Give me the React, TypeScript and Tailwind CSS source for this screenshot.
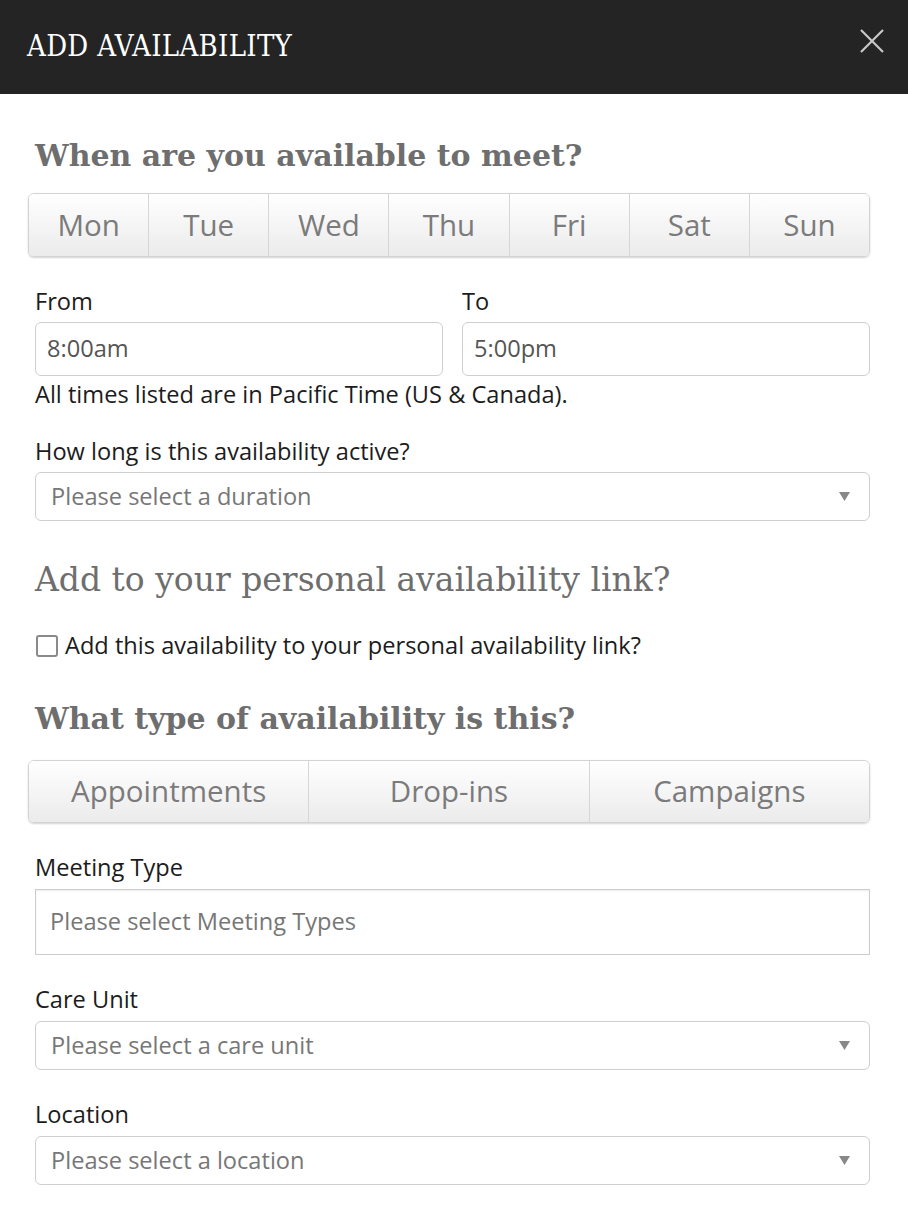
import React from 'react';

const days = ['Mon', 'Tue', 'Wed', 'Thu', 'Fri', 'Sat', 'Sun'];
const types = ['Appointments', 'Drop-ins', 'Campaigns'];

const slab = "font-['Roboto_Slab','DejaVu_Serif',serif]";

function ButtonGroup({ items, height }: { items: string[]; height: string }) {
  return (
    <div
      className={`-ml-[7px] flex ${height} overflow-hidden rounded-[6px] border border-[#d3d3d3] shadow-[0_1px_2px_rgba(0,0,0,0.18)]`}
    >
      {items.map((item, i) => (
        <div
          key={item}
          className={`flex flex-1 items-center justify-center bg-gradient-to-b from-white to-[#ebebeb] text-[29.5px] text-[#7b7b7b] ${
            i > 0 ? 'border-l border-[#d6d6d6]' : ''
          }`}
        >
          {item}
        </div>
      ))}
    </div>
  );
}

function Select({ placeholder }: { placeholder: string }) {
  return (
    <div className="flex h-[49px] items-center justify-between rounded-[6px] border border-[#cfcfcf] pl-[15px] pr-[19px] text-[23.6px] text-[#777]">
      <span>{placeholder}</span>
      <svg width="11" height="9" viewBox="0 0 11 9">
        <path d="M0 0 H11 L5.5 9 Z" fill="#888" />
      </svg>
    </div>
  );
}

function Label({ children, mt }: { children: React.ReactNode; mt: string }) {
  return <div className={`${mt} h-[30px] leading-[30px] text-[23.6px] text-[#1c1c1c]`}>{children}</div>;
}

export default function App() {
  return (
    <div className="min-h-[1224px] w-[908px] bg-white font-['Open_Sans',sans-serif]">
      {/* Header */}
      <div className="flex h-[94px] items-center justify-between bg-[#242424] pl-[27px] pr-[24px]">
        <h1 className={`${slab} text-[29px] tracking-[0.3px] text-white [font-stretch:condensed]`}>
          ADD AVAILABILITY
        </h1>
        <svg width="24" height="24" viewBox="0 0 24 24" className="-mt-[12px]">
          <path d="M1 1 L23 23 M23 1 L1 23" stroke="#c8c8c8" strokeWidth="2.2" />
        </svg>
      </div>

      <div className="pl-[35px] pr-[38px]">
        <h2 className={`${slab} mt-[42px] h-[40px] leading-[40px] text-[30px] font-bold text-[#6e6e6e]`}>
          When are you available to meet?
        </h2>

        <div className="mt-[17px]">
          <ButtonGroup items={days} height="h-[64px]" />
        </div>

        <div className="mt-[29px] grid grid-cols-2 gap-[19px]">
          <div>
            <div className="h-[30px] leading-[30px] text-[23.6px] text-[#1c1c1c]">From</div>
            <div className="mt-[6px] flex h-[54px] items-center rounded-[6px] border border-[#cfcfcf] pl-[11px] text-[23.6px] text-[#555]">
              8:00am
            </div>
          </div>
          <div>
            <div className="h-[30px] leading-[30px] text-[23.6px] text-[#1c1c1c]">To</div>
            <div className="mt-[6px] flex h-[54px] items-center rounded-[6px] border border-[#cfcfcf] pl-[11px] text-[23.6px] text-[#555]">
              5:00pm
            </div>
          </div>
        </div>

        <Label mt="mt-[3px]">All times listed are in Pacific Time (US &amp; Canada).</Label>

        <Label mt="mt-[27px]">How long is this availability active?</Label>
        <div className="mt-[6px]">
          <Select placeholder="Please select a duration" />
        </div>

        <h2 className={`${slab} mt-[39px] h-[40px] leading-[40px] text-[33px] text-[#6e6e6e]`}>
          Add to your personal availability link?
        </h2>

        <label className="mt-[31px] flex h-[30px] items-center gap-[7px] text-[23.6px] text-[#1c1c1c]">
          <span className="ml-[1px] h-[22px] w-[22px] shrink-0 rounded-[3px] border-2 border-[#8a8a8a] bg-white" />
          Add this availability to your personal availability link?
        </label>

        <h2 className={`${slab} mt-[38px] h-[40px] leading-[40px] text-[30px] font-bold text-[#6e6e6e]`}>
          What type of availability is this?
        </h2>

        <div className="mt-[21px]">
          <ButtonGroup items={types} height="h-[63px]" />
        </div>

        <Label mt="mt-[29px]">Meeting Type</Label>
        <div className="mt-[7px] flex h-[66px] items-center border border-[#cdcdcd] pl-[14px] text-[23.6px] text-[#777] shadow-[inset_0_1px_2px_rgba(0,0,0,0.08)]">
          Please select Meeting Types
        </div>

        <Label mt="mt-[29px]">Care Unit</Label>
        <div className="mt-[7px]">
          <Select placeholder="Please select a care unit" />
        </div>

        <Label mt="mt-[29px]">Location</Label>
        <div className="mt-[7px]">
          <Select placeholder="Please select a location" />
        </div>
      </div>
    </div>
  );
}
